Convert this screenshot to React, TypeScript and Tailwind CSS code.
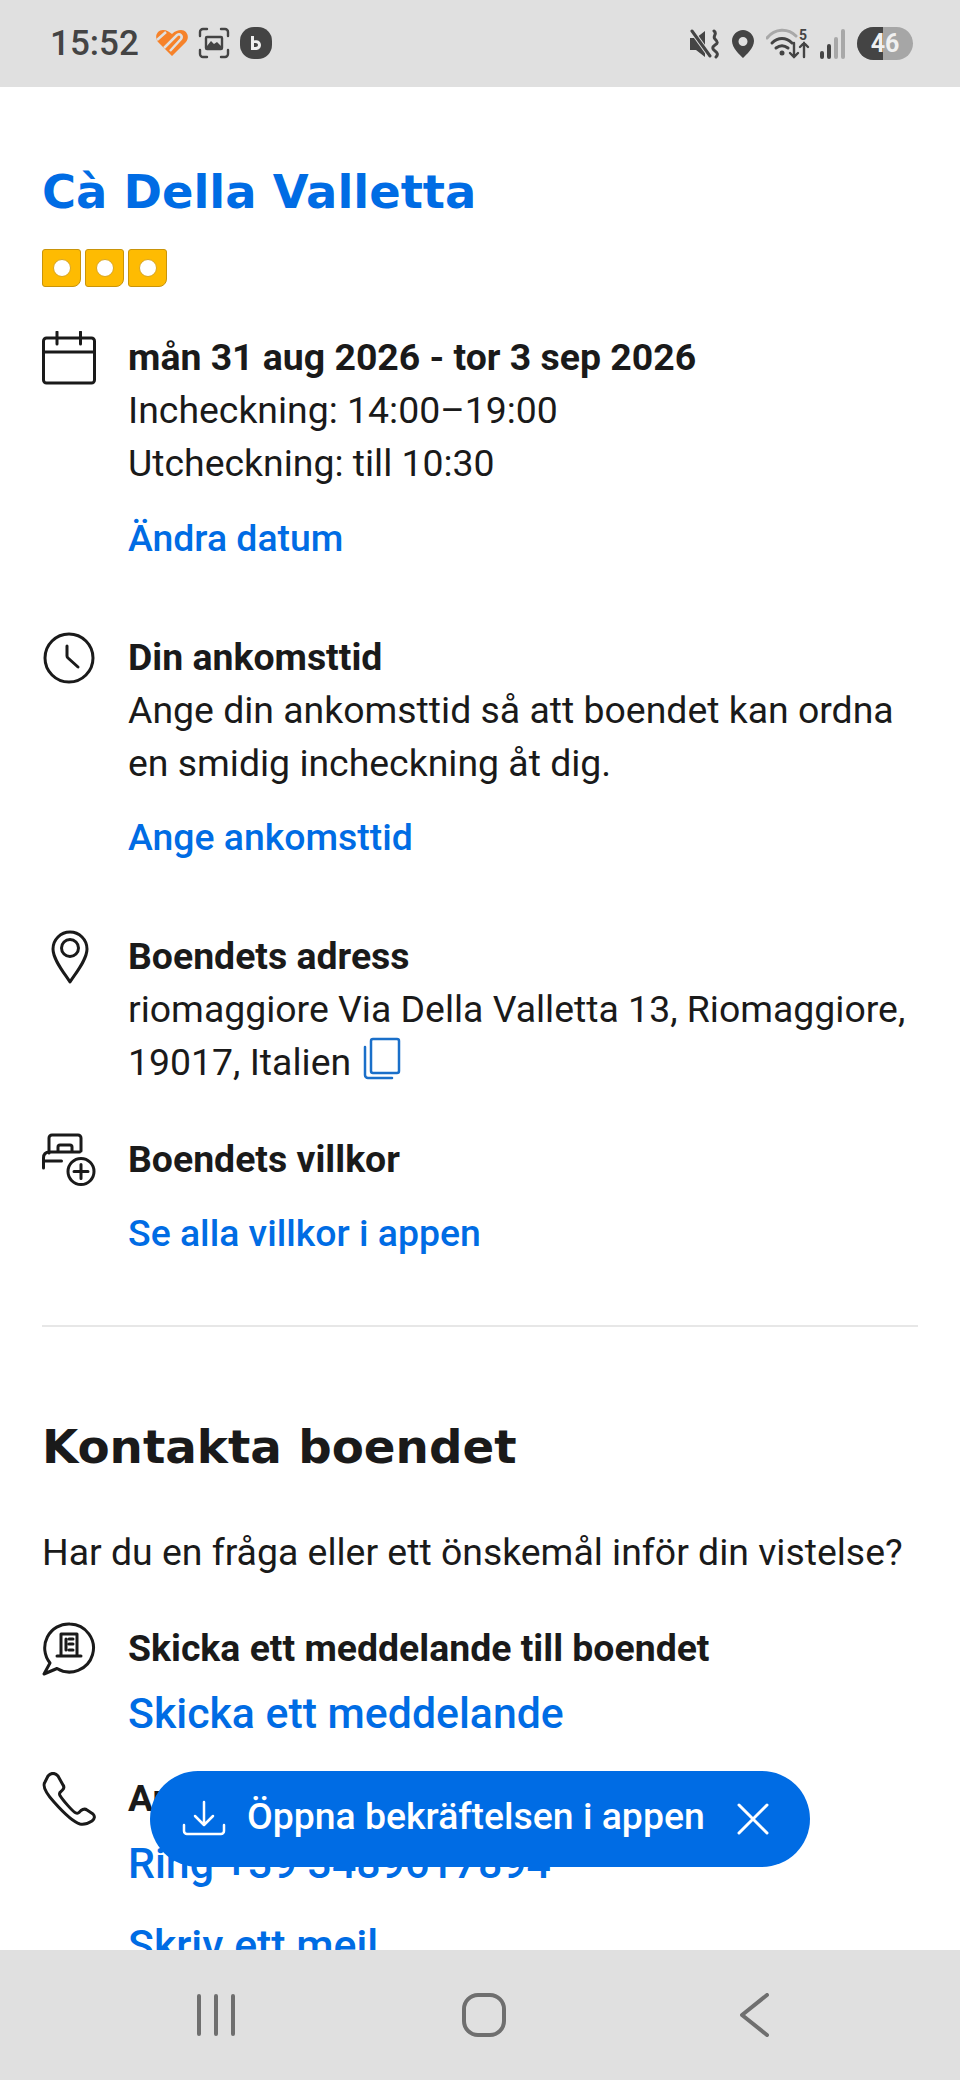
function HeartIcon() {
  return (
    <svg width="34" height="28" viewBox="0 0 34 28" fill="none">
      <path d="M17 27 L3 13 C-1 8 2 1 8 1 C12 1 14 3 17 5 C20 2 23 1 26 1 C32 1 35 8 31 13 Z" fill="#f6822a" />
      <path d="M2 11 L11 3 M9 19 L22 6 C25 4 28 7 26 10 L15 22" stroke="#e0e0e0" strokeWidth="2.5" />
    </svg>
  );
}

function ScreenshotIcon() {
  return (
    <svg width="32" height="32" viewBox="0 0 32 32" fill="none" stroke="#444" strokeWidth="2.4" strokeLinecap="round">
      <path d="M2 9V5a3 3 0 0 1 3-3h4M23 2h4a3 3 0 0 1 3 3v4M30 23v4a3 3 0 0 1-3 3h-4M9 30H5a3 3 0 0 1-3-3v-4" />
      <path d="M9 10h14a1 1 0 0 1 1 1v10a1 1 0 0 1-1 1H9a1 1 0 0 1-1-1V11a1 1 0 0 1 1-1z" />
      <path d="M9 19l4-5 3 3 3-2 4 4v2H9z" fill="#444" stroke="none" />
    </svg>
  );
}

function BookingBadge() {
  return (
    <div className="w-[32px] h-[32px] rounded-[14px] bg-[#444444] flex items-center justify-center">
      <svg width="14" height="16" viewBox="0 0 14 16" fill="#eee">
        <path d="M2 1h3v4.500c2.500-1 7 0 7 4.500 0 4-3.500 5-5 5H2zM5 8v4h1.500c1.500 0 2.500-.8 2.500-2S8 8 6.500 8z" />
      </svg>
    </div>
  );
}

function MuteIcon() {
  return (
    <svg width="32" height="30" viewBox="0 0 32 30" fill="none">
      <path d="M1 9h6l9-7v26l-9-7H1z" fill="#444" />
      <path d="M3 2l18 25" stroke="#e0e0e0" strokeWidth="5" />
      <path d="M3 2l18 25" stroke="#444" strokeWidth="3" strokeLinecap="round" />
      <path d="M25 2c4 3-2 5 1 8s3 4 0 6 -3 4 0 6 3 4 1 6" stroke="#444" strokeWidth="3" strokeLinecap="round" />
    </svg>
  );
}

function LocationIcon() {
  return (
    <svg width="22" height="28" viewBox="0 0 22 28">
      <path fillRule="evenodd" d="M11 0C5 0 0 5 0 11c0 7 8 14 11 17 3-3 11-10 11-17C22 5 17 0 11 0zm0 7a4.500 4.500 0 1 1 0 9 4.500 4.500 0 0 1 0-9z" fill="#444" />
    </svg>
  );
}

function WifiIcon() {
  return (
    <svg width="44" height="32" viewBox="0 0 44 32" fill="none" strokeLinecap="round">
      <path d="M1 10C9 0 22 0 30 8" stroke="#a8a8a8" strokeWidth="3" />
      <path d="M6 15c6-6 14-6 20 0M10 20c4-3 8-3 12 0" stroke="#444" strokeWidth="3" />
      <circle cx="16" cy="25" r="2.500" fill="#444" />
      <path d="M28 15v14M24 25l4 4 4-4M38 29V15M34 19l4-4 4 4" stroke="#444" strokeWidth="2.400" />
      <text x="33" y="12" fontSize="14" fontWeight="700" fill="#444" fontFamily="Roboto, sans-serif">5</text>
    </svg>
  );
}

function SignalIcon() {
  return (
    <div className="flex items-end gap-[3px] h-[30px]">
      <div className="w-[4px] h-[8px] rounded-full bg-[#444444]" />
      <div className="w-[4px] h-[15px] rounded-full bg-[#444444]" />
      <div className="w-[4px] h-[22px] rounded-full bg-[#a8a8a8]" />
      <div className="w-[4px] h-[30px] rounded-full bg-[#a8a8a8]" />
    </div>
  );
}

function Battery() {
  return (
    <div className="relative w-[56px] h-[33px] rounded-full overflow-hidden bg-[#a6a6a6] flex">
      <div className="w-[26px] h-full bg-[#444444]" />
      <span className="absolute inset-0 flex items-center justify-center text-[#f0f0f0] text-[25px] font-bold">46</span>
    </div>
  );
}

function CalendarIcon() {
  return (
    <svg width="54" height="54" viewBox="0 0 54 54" fill="none" stroke="#1a1a1a" strokeWidth="3" strokeLinecap="round" strokeLinejoin="round">
      <rect x="1.500" y="7" width="51" height="45" rx="3" />
      <path d="M1.500 21h51M15 1v12M38.500 1v12" />
    </svg>
  );
}

function ClockIcon() {
  return (
    <svg width="54" height="54" viewBox="0 0 54 54" fill="none" stroke="#1a1a1a" strokeWidth="3" strokeLinecap="round" strokeLinejoin="round">
      <circle cx="27" cy="27" r="24" />
      <path d="M25 15v10a3 3 0 0 0 1 2l10 9" />
    </svg>
  );
}

function PinIcon() {
  return (
    <svg width="38" height="54" viewBox="0 0 38 54" fill="none" stroke="#1a1a1a" strokeWidth="3" strokeLinejoin="round">
      <path d="M19 52C14 44 2 30 2 19a17 17 0 0 1 34 0c0 11-12 25-17 33z" />
      <circle cx="19" cy="18" r="8.500" />
    </svg>
  );
}

function BedPlusIcon() {
  return (
    <svg width="54" height="54" viewBox="0 0 54 54" fill="none" stroke="#1a1a1a" strokeWidth="3" strokeLinecap="round" strokeLinejoin="round">
      <path d="M7 20V5a3 3 0 0 1 3-3h26a3 3 0 0 1 3 3v13" />
      <path d="M16 18v-4a2 2 0 0 1 2-2h10a2 2 0 0 1 2 2v4" />
      <path d="M1.500 35V25c0-4 2-6 6-6h30M1.500 28h18" />
      <circle cx="39" cy="38.500" r="13" />
      <path d="M39 31.500v14M32 38.500h14" />
    </svg>
  );
}

function MessageIcon() {
  return (
    <svg width="54" height="54" viewBox="0 0 54 54" fill="none" stroke="#1a1a1a" strokeWidth="3" strokeLinecap="round" strokeLinejoin="round">
      <path d="M28 2a24 24 0 1 1-13 44.500L2 52l6-11A24 24 0 0 1 28 2z" />
      <path d="M19 33V12h16v21M15 34h24M27 17h4M27 22h4M27 28h4M24 17v11" />
    </svg>
  );
}

function PhoneIcon() {
  return (
    <svg width="54" height="54" viewBox="0 0 54 54" fill="none" stroke="#1a1a1a" strokeWidth="3" strokeLinejoin="round">
      <path d="M3 10c-3 4 1 11 9 20s19 20 26 22c4 1 8-.5 12-3 3-2.500 3-5 1-7l-6-4c-2-1.500-4-1-6 .5l-2 2c-1 1-2 1-4 0-3-2-12-12-15-17-1-2-.5-3 1-4l1.500-1.500c1.500-1.500 2-3 .5-5L16 4C13 .5 9 .5 6 4z" />
    </svg>
  );
}

function CopyIcon() {
  return (
    <svg width="38" height="44" viewBox="0 0 38 44" fill="none" stroke="#1a6fc9" strokeWidth="2.500" strokeLinecap="round" className="inline-block ml-[12px] -mt-[12px] align-middle">
      <rect x="8" y="2" width="28" height="34" rx="2" />
      <path d="M2 10v28a3 3 0 0 0 3 3h24" />
    </svg>
  );
}

function DownloadIcon() {
  return (
    <svg width="44" height="40" viewBox="0 0 44 40" fill="none" stroke="#fff" strokeWidth="2.500" strokeLinecap="round" strokeLinejoin="round">
      <path d="M22 3v22M13 17l9 9 9-9" />
      <path d="M2 26v6a3 3 0 0 0 3 3h34a3 3 0 0 0 3-3v-6" />
    </svg>
  );
}

function StatusBar() {
  return (
    <div className="h-[87px] shrink-0 bg-[#e0e0e0] flex items-center justify-between pl-[50px] pr-[47px] text-[#444444]">
      <div className="flex items-center">
        <span className="text-[35px] font-medium mr-[16px]">15:52</span>
        <HeartIcon />
        <div className="ml-[9px] mr-[10px]"><ScreenshotIcon /></div>
        <BookingBadge />
      </div>
      <div className="flex items-center">
        <MuteIcon />
        <div className="ml-[11px] mr-[12px]"><LocationIcon /></div>
        <WifiIcon />
        <div className="ml-[10px] mr-[12px]"><SignalIcon /></div>
        <Battery />
      </div>
    </div>
  );
}

function InfoRow({ icon, className, children }: { icon: React.ReactNode; className?: string; children: React.ReactNode }) {
  return (
    <div className={`flex ${className ?? ""}`}>
      <div className="w-[86px] shrink-0 flex">{icon}</div>
      <div className="flex-1 min-w-0">{children}</div>
    </div>
  );
}

function Title({ children }: { children: React.ReactNode }) {
  return <div className="font-bold text-[#1a1a1a]">{children}</div>;
}

function ActionLink({ children }: { children: React.ReactNode }) {
  return <div className="mt-[21px] font-medium text-[#006ce4]">{children}</div>;
}

export default function App() {
  return (
    <div className="w-[960px] h-[2080px] flex flex-col overflow-hidden bg-white text-[#1a1a1a] font-['Roboto',sans-serif] text-[37.4px] leading-[53.2px]">
      <StatusBar />
      <main className="relative flex-1 min-h-0 overflow-hidden">
        <div className="px-[42px] pt-[72px]">
          <h1 className="font-['DejaVu_Sans',sans-serif] font-bold text-[46.4px] leading-[66px] text-[#006ce4]">Cà Della Valletta</h1>
          <div className="flex gap-[4px] mt-[24px]">
            {[0, 1, 2].map((i) => (
              <div key={i} className="w-[39px] h-[38px] rounded-tl-[3px] rounded-tr-[3px] rounded-bl-[3px] rounded-br-[8px] bg-[#febb02] border border-[#c9940a] flex items-center justify-center">
                <div className="w-[18px] h-[18px] rounded-full bg-white border border-[#d9a520]" />
              </div>
            ))}
          </div>

          <InfoRow icon={<CalendarIcon />} className="mt-[44px]">
            <Title>mån 31 aug 2026 - tor 3 sep 2026</Title>
            <div>Incheckning: 14:00–19:00</div>
            <div>Utcheckning: till 10:30</div>
            <ActionLink>Ändra datum</ActionLink>
          </InfoRow>

          <InfoRow icon={<ClockIcon />} className="mt-[66px]">
            <Title>Din ankomsttid</Title>
            <div>Ange din ankomsttid så att boendet kan ordna en smidig incheckning åt dig.</div>
            <ActionLink>Ange ankomsttid</ActionLink>
          </InfoRow>

          <InfoRow icon={<div className="ml-[9px]"><PinIcon /></div>} className="mt-[65px]">
            <Title>Boendets adress</Title>
            <div>
              riomaggiore Via Della Valletta 13, Riomaggiore, 19017, Italien
              <CopyIcon />
            </div>
          </InfoRow>

          <InfoRow icon={<BedPlusIcon />} className="mt-[44px]">
            <Title>Boendets villkor</Title>
            <ActionLink>Se alla villkor i appen</ActionLink>
          </InfoRow>

          <div className="h-[2px] bg-[#e7e7e7] mt-[64px]" />

          <h2 className="mt-[88px] font-['DejaVu_Sans',sans-serif] font-bold text-[46.8px] leading-[64px] text-[#1a1a1a]">Kontakta boendet</h2>
          <p className="mt-[47px]">Har du en fråga eller ett önskemål inför din vistelse?</p>

          <InfoRow icon={<MessageIcon />} className="mt-[43px]">
            <Title>Skicka ett meddelande till boendet</Title>
            <div className="mt-[12px] font-medium text-[42.8px] text-[#006ce4]">Skicka ett meddelande</div>
          </InfoRow>

          <InfoRow icon={<PhoneIcon />} className="mt-[32px]">
            <Title>Använd telefon</Title>
            <div className="mt-[12px] font-medium text-[42.8px] text-[#006ce4]">Ring +39 3489617894</div>
            <div className="mt-[28px] font-medium text-[42.8px] text-[#006ce4]">Skriv ett mejl</div>
          </InfoRow>
        </div>

        <div className="absolute left-[150px] top-[1684px] w-[660px] h-[96px] rounded-full bg-[#006ce4] text-white flex items-center pl-[32px]">
          <DownloadIcon />
          <span className="ml-[21px] mb-[5px] font-medium">Öppna bekräftelsen i appen</span>
          <svg width="32" height="32" viewBox="0 0 32 32" fill="none" stroke="#fff" strokeWidth="3" strokeLinecap="round" className="ml-[32px]">
            <path d="M2 2l28 28M30 2L2 30" />
          </svg>
        </div>
      </main>
      <nav className="h-[130px] shrink-0 bg-[#e0e0e0] flex items-center">
        <svg width="42" height="42" viewBox="0 0 42 42" fill="none" stroke="#6f6f6f" strokeWidth="4" strokeLinecap="round" className="ml-[195px]">
          <path d="M4 2v38M21 2v38M38 2v38" />
        </svg>
        <svg width="44" height="44" viewBox="0 0 44 44" fill="none" stroke="#6f6f6f" strokeWidth="4" className="ml-[225px]">
          <rect x="2" y="2" width="40" height="40" rx="14" />
        </svg>
        <svg width="30" height="44" viewBox="0 0 30 44" fill="none" stroke="#6f6f6f" strokeWidth="4" strokeLinecap="round" strokeLinejoin="round" className="ml-[234px]">
          <path d="M27 2L2 22l25 20" />
        </svg>
      </nav>
    </div>
  );
}
